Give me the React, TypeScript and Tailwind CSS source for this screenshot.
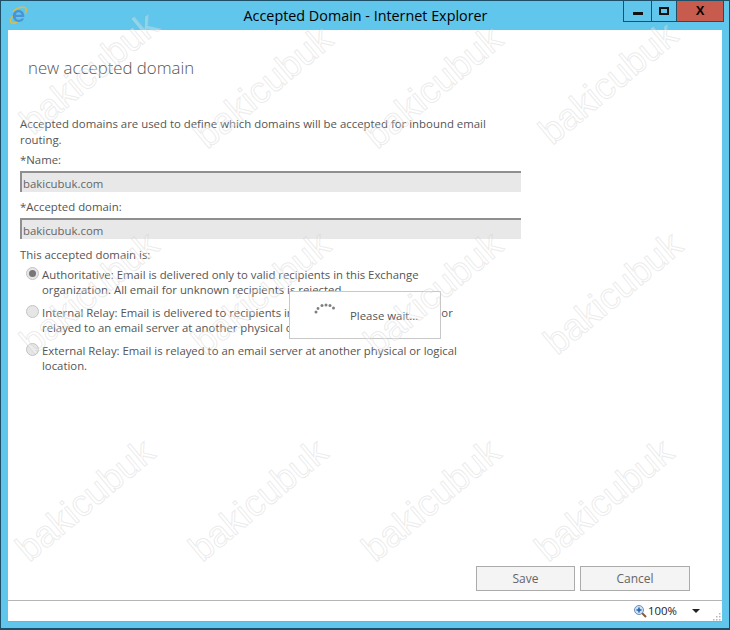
const font = { fontFamily: '"Open Sans","Noto Sans",sans-serif' };

const marks = [
  [88, 72], [262, 86], [432, 86], [607, 82],
  [88, 292], [260, 292], [432, 292], [612, 292],
  [84, 499], [257, 499], [430, 499], [603, 499],
];

const grip = [[6, 0], [3, 3], [6, 3], [0, 6], [3, 6], [6, 6]];

function Watermark({ x, y }: { x: number; y: number }) {
  return (
    <div
      className="absolute pointer-events-none select-none whitespace-nowrap text-[37px] leading-none text-white/30 font-['Liberation_Sans',sans-serif] [-webkit-text-stroke:1px_rgba(190,190,190,0.3)] -rotate-40 -translate-x-1/2 -translate-y-1/2"
      style={{ left: x, top: y }}
    >
      bakicubuk
    </div>
  );
}

function Radio({ on, lines }: { on?: boolean; lines: string[] }) {
  return (
    <div className="flex items-start">
      <span className="mt-[1px] ml-[6px] mr-[3px] w-[13px] h-[13px] rounded-full border border-[#c4c4c4] bg-[#e6e6e6] flex items-center justify-center shrink-0">
        {on && <span className="w-[7px] h-[7px] rounded-full bg-[#777]" />}
      </span>
      <div className="w-[440px] pt-[1px] text-[11.35px] leading-[15px] text-[#555]">
        {lines.map((l) => (
          <div key={l} className="whitespace-nowrap">{l}</div>
        ))}
      </div>
    </div>
  );
}

function Field({ label, value }: { label: string; value: string }) {
  return (
    <div>
      <div className="h-[15px] text-[11.4px] leading-[15px] text-[#555]">{label}</div>
      <div className="mt-[4px] w-[501px] h-[21px] bg-[#e8e8e8] border-t-2 border-l-2 border-[#8f8f8f] pl-[1px] text-[11.4px] leading-[21px] text-[#666]">
        {value}
      </div>
    </div>
  );
}

function IeLogo() {
  return (
    <svg width="19" height="19" viewBox="0 0 19 19">
      <path d="M3.700 5.800C6.800 2.600 10.500 1 14 1.200c2.300.1 3.500 1.300 3.300 3.100-.1 1-.5 2-1.100 3" fill="none" stroke="#e6bb35" strokeWidth="1.400" />
      <path d="M3.600 9.800C1.700 12.700 1 15 2 16.300c1 1.300 3.500 1.100 6.300-.3" fill="none" stroke="#e6bb35" strokeWidth="1.500" />
      <path d="M3.800 10C3.800 6.600 6.300 4 9.600 4c3.400 0 5.700 2.500 5.700 6.100v.8H6.700c.2 1.900 1.300 2.900 3.100 2.900 1.100 0 2.100-.5 2.600-1.300h2.700c-.8 2.100-2.900 3.400-5.300 3.400-3.600 0-6-2.500-6-5.900zM6.800 8.800h5.700C12.200 7.200 11.100 6.200 9.600 6.200S7.100 7.200 6.800 8.800z" fill="#4a94d6" fillRule="evenodd" />
    </svg>
  );
}

export default function App() {
  return (
    <div className="relative w-[730px] h-[630px] overflow-hidden bg-[#60c6eb] border border-[#1d4f66] border-b-2 flex flex-col" style={font}>
      <div className="relative h-[29px] shrink-0 flex items-center justify-center">
        <div className="absolute left-[8px] top-[5px]"><IeLogo /></div>
        <div className="text-[14.35px] text-black pl-[1px] pt-[1px]">Accepted Domain - Internet Explorer</div>
        <div className="absolute right-[5px] top-0 flex h-[21px] border border-t-0 border-[#1d4f66]">
          <div className="w-[28px] border-r border-[#1d4f66] flex items-center justify-center">
            <span className="w-[10px] h-[3px] bg-[#111] mt-[5px]" />
          </div>
          <div className="w-[25px] border-r border-[#1d4f66] flex items-center justify-center">
            <span className="w-[10px] h-[8px] border-2 border-[#111]" />
          </div>
          <div className="w-[46px] bg-[#c75b4e] flex items-center justify-center text-[13px] font-bold text-black font-['Liberation_Sans',sans-serif]">X</div>
        </div>
      </div>

      <div className="relative mx-[7px] flex-1 bg-white flex flex-col">
        <div className="pl-[20px] pt-[27px] text-[16.8px] font-light leading-[22px] text-[#555]">new accepted domain</div>
        <div className="pl-[12px] pt-[37px] flex flex-col">
          <div className="text-[11.4px] leading-[16px] text-[#555] w-[490px]">
            Accepted domains are used to define which domains will be accepted for inbound email routing.
          </div>
          <div className="mt-[4px] h-[40px]"><Field label="*Name:" value="bakicubuk.com" /></div>
          <div className="mt-[7px]"><Field label="*Accepted domain:" value="bakicubuk.com" /></div>
          <div className="mt-[8px] text-[11.4px] leading-[15px] text-[#555]">This accepted domain is:</div>
          <div className="mt-[4px] flex flex-col gap-[7px]">
            <Radio on lines={["Authoritative: Email is delivered only to valid recipients in this Exchange", "organization. All email for unknown recipients is rejected."]} />
            <Radio lines={["Internal Relay: Email is delivered to recipients in this Exchange organization or", "relayed to an email server at another physical or logical location."]} />
            <Radio lines={["External Relay: Email is relayed to an email server at another physical or logical", "location."]} />
          </div>
        </div>
        <div className="mt-auto flex justify-end gap-[5px] pr-[32px] pb-[9px]">
          <button className="w-[99px] h-[25px] bg-[#f4f4f4] border border-[#ababab] text-[12px] text-[#666]">Save</button>
          <button className="w-[110px] h-[25px] bg-[#f4f4f4] border border-[#ababab] text-[12px] text-[#666]">Cancel</button>
        </div>

        <div className="absolute left-[281px] top-[261px] w-[152px] h-[48px] bg-white border border-[#c8c8c8] flex items-center">
          <svg className="absolute left-[24px] top-[11px]" width="22" height="11" viewBox="0 0 22 11" fill="#808080">
            <circle cx="2" cy="9" r="1.500" /><circle cx="4" cy="5.500" r="1.400" /><circle cx="8" cy="2.500" r="1.500" /><circle cx="12" cy="2" r="1.500" /><circle cx="16" cy="2.500" r="1.500" /><circle cx="19.500" cy="5" r="1.500" />
          </svg>
          <span className="ml-[60px] mt-[2px] text-[11.4px] text-[#555]">Please wait...</span>
        </div>
      </div>

      <div className="relative mx-[7px] h-[22px] bg-white border-t border-[#b5b5b5] border-b border-b-[#9aa5ab] shrink-0">
        <svg className="absolute left-[625px] top-[3px]" width="14" height="14" viewBox="0 0 14 14">
          <path d="M9 9l4 4" stroke="#8a5a2b" strokeWidth="2" />
          <circle cx="6" cy="6" r="4.500" fill="#cfe3f5" stroke="#6d8fb5" />
          <path d="M3.500 6h5M6 3.500v5" stroke="#1d5fb0" strokeWidth="1.500" />
        </svg>
        <span className="absolute left-[640px] top-[1px] text-[11.4px] text-[#222]">100%</span>
        <span className="absolute left-[684px] top-[8px] border-x-[4px] border-x-transparent border-t-[4px] border-t-[#222]" />
        <svg className="absolute left-[705px] top-[12px]" width="8" height="8" viewBox="0 0 8 8" fill="#b8b8b8">
          {grip.map(([x, y]) => (
            <rect key={`${x}-${y}`} x={x} y={y} width="1.500" height="1.500" />
          ))}
        </svg>
      </div>
      <div className="h-[6px] shrink-0" />

      {marks.map(([x, y]) => (
        <Watermark key={`${x}-${y}`} x={x} y={y} />
      ))}
    </div>
  );
}
